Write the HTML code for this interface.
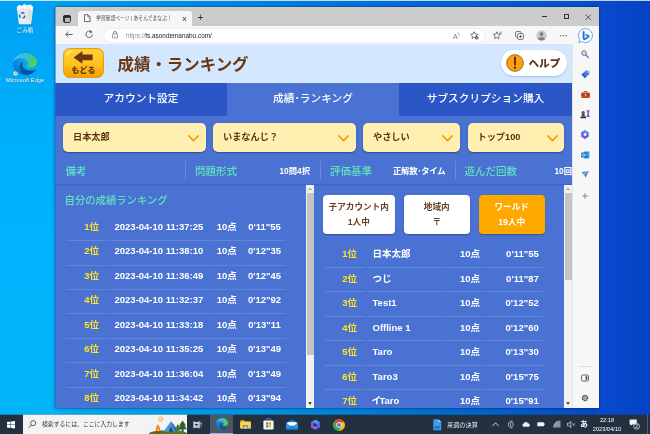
<!DOCTYPE html>
<html lang="ja">
<head>
<meta charset="utf-8">
<title>学習確認ページ | あそんでまなぶ！</title>
<style>
*{margin:0;padding:0;box-sizing:border-box}
html,body{width:650px;height:434px;overflow:hidden}
body{font-family:"Liberation Sans","Noto Sans CJK JP",sans-serif;position:relative;background:#0a9cec;}
.abs{position:absolute}
#root{position:absolute;left:0;top:0;width:650px;height:434px;overflow:hidden;will-change:transform}
svg{position:absolute;overflow:visible}
#desk{left:0;top:0;width:650px;height:434px;background:linear-gradient(90deg,#00a0f2 0%,#009cee 9%,#0078d8 49%,#0650c8 90%,#0444c0 94%,#0442be 100%)}
#deskb{left:0;top:396px;width:650px;height:20px;background:linear-gradient(90deg,#00b4f6 0%,#00aef2 9%,#00a5eb 17%,#0088dc 50%,#005aca 82%,#0548c8 93%,#0545c6 100%)}
#deskl{left:0;top:1px;width:60px;height:415px;background:linear-gradient(180deg,#00a0f2 0%,#00a3f4 8%,#00aef9 25%,#00b5fd 65%,#00b4f7 100%)}
#deskr{left:596px;top:1px;width:54px;height:415px;background:linear-gradient(90deg,#0a4ccf 0%,#0848cc 25%,#0442c3 100%)}
.dlabel{color:#fff;font-size:5.5px;text-align:center;white-space:nowrap;text-shadow:0 .4px .8px rgba(0,40,90,.55)}
/* window */
#win{left:55px;top:7px;width:544px;height:401px;background:#f7f7f7;box-shadow:0 0 1.6px rgba(0,20,70,.65),0 1px 4px rgba(0,20,70,.2)}
#tbar{left:0;top:0;width:544px;height:19px;background:#cccccc}
#tab{left:23px;top:4px;width:114px;height:15px;background:#f7f7f7;border-radius:3px 3px 0 0}
#tabtxt{left:41px;top:7px;font-size:5.8px;line-height:8px;color:#555;white-space:nowrap;transform:scaleX(.83);transform-origin:0 0}
#tool{left:0;top:19px;width:544px;height:18px;background:#f7f7f7}
#addr{left:49px;top:22px;width:381px;height:13px;background:#fff;border-radius:6.5px;box-shadow:0 0 0 .5px #e6e6e6}
#url{left:71px;top:23.5px;font-size:6.42px;line-height:9px;color:#222;white-space:nowrap}
#url span{color:#8f8f8f}
#side{left:517px;top:37px;width:27px;height:364px;background:#f7f7f7;box-shadow:inset 1px 0 0 #e8e8e8}
.ti{color:#333;font-size:9px;line-height:10px;white-space:nowrap}
/* page */
#page{left:0;top:37px;width:517px;height:364px;background:#4a72d2;overflow:hidden}
#phead{left:0;top:0;width:517px;height:39px;background:#d3e7ff}
#ptitle{left:62.5px;top:8.4px;font-size:16.45px;line-height:24px;font-weight:bold;color:#6b3712;white-space:nowrap}
.tabb{top:39px;height:32.5px;color:#fff;font-size:10.7px;font-weight:500;line-height:31px;text-align:center;white-space:nowrap}
.dd{top:79px;height:29px;background:#fff0b2;border-radius:5px;color:#5a3210;font-size:9.2px;font-weight:bold;line-height:28.6px;padding-left:10px;white-space:nowrap;box-shadow:0 1px 1.5px rgba(0,0,50,.35)}
.dd svg{right:6.5px;top:11.5px}
.lab{top:120px;color:#5fe3bd;font-size:10.5px;font-weight:500;line-height:14px;white-space:nowrap}
.val{top:120.5px;color:#fff;font-size:8.3px;font-weight:bold;line-height:12px;white-space:nowrap}
.vsep{top:117px;width:1px;height:19px;background:#6a8ade}
#lp{left:0;top:141px;width:250px;height:223px;overflow:hidden}
#rp{left:258px;top:141px;width:251px;height:223px;overflow:hidden}
.row{height:24.5px;left:0;width:100%}
.c{position:absolute;top:0;height:24.43px;line-height:20px;font-size:9.5px;font-weight:bold;color:#fff;white-space:nowrap;border-bottom:1px solid #6486da}
.c.rk{color:#ffe425}
#lp .c{height:24.2px}
#rp .c{height:23.7px}
.btn{top:10px;height:39px;border-radius:4px;font-size:8.65px;font-weight:bold;text-align:center;line-height:15px;padding-top:4.5px;white-space:nowrap;box-shadow:0 1px 1.5px rgba(0,0,50,.3)}
.sb{top:141px;width:8px;height:223px;background:#f1f1f1}
.thumb{left:.5px;width:7.5px;background:#c4c4c4}
.arr{left:0;width:8px;height:8px;background:#f1f1f1}
.arr.up{top:0}.arr.dn{bottom:0}
.arr:after{content:"";position:absolute;left:2.5px;border:1.6px solid transparent}
.arr.up:after{top:1px;border-bottom:2px solid #555;border-top:0}
.arr.dn:after{top:3.5px;border-top:2px solid #333;border-bottom:0}
#lsb{left:251.2px}#rsb{left:509px}
/* taskbar */
#task{left:0;top:414px;width:650px;height:20px;background:linear-gradient(180deg,rgba(34,48,63,.35) 0,rgba(34,48,63,.35) 1px,#22303f 1px)}
#search{left:22.6px;top:414px;width:164.2px;height:20px;background:linear-gradient(180deg,rgba(243,243,243,.35) 0,rgba(243,243,243,.35) 1px,#f3f3f3 1px)}
#stxt{left:42px;top:420px;font-size:5.85px;line-height:9px;color:#333;white-space:nowrap}
.tt{color:#fff;white-space:nowrap;font-size:5.7px;line-height:7px}
</style>
</head>
<body>
<div id="root">
<div id="desk" class="abs"></div>
<div id="deskb" class="abs"></div>
<div id="deskl" class="abs"></div>
<div id="deskr" class="abs"></div>
<div class="abs" style="left:0;top:0;width:650px;height:1px;background:rgba(255,255,255,.75)"></div>

<!-- desktop icons -->
<svg style="left:16px;top:3.5px" width="18" height="20.5" viewBox="0 0 18 20.5"><path d="M.8 3.4 L3 .9 L5.6 1.9 L8.6 .3 L11.4 1.6 L14.4 .6 L17.2 3.2 L15.2 19.4 Q15.1 20.2 14.2 20.2 H3.8 Q2.9 20.2 2.8 19.4Z" fill="#e9edf0"/><path d="M.8 3.4 L3 .9 L5.6 1.9 L8.6 .3 L11.4 1.6 L14.4 .6 L17.2 3.2 L16.9 5.4 L13.6 4.2 L10.6 5.6 L7.4 4 L4.2 5.4 L1.1 4.8Z" fill="#f9fafb"/><path d="M5.6 1.9 L7.4 4 M11.4 1.6 L10.6 5.6 M14.4 .6 L13.6 4.2 M4.2 5.4 L5.2 10 L3.4 14 M13.6 4.2 L12.8 9 L14.6 13 M10.6 5.6 L11.6 12 L10.4 18 M7.4 4 L8 9" fill="none" stroke="#c5ccd2" stroke-width=".45"/><path d="M12.4 6 L16.4 7 L15.4 17 L13 19.6Z" fill="#d5dbe0" opacity=".8"/><circle cx="6.2" cy="11.4" r="2.7" fill="none" stroke="#1f74d4" stroke-width="1.5" stroke-dasharray="3.6 2"/></svg>
<div class="abs dlabel" style="left:5px;top:25.8px;width:40px;font-size:5.6px">ごみ箱</div>
<svg style="left:13.2px;top:53px" width="23.8" height="22" viewBox="0 0 256 256" preserveAspectRatio="none"><defs><linearGradient id="ega" x1="58" y1="177" x2="240" y2="177" gradientUnits="userSpaceOnUse"><stop offset="0" stop-color="#0c59a4"/><stop offset="1" stop-color="#114a8b"/></linearGradient><linearGradient id="egc" x1="157" y1="100" x2="46" y2="221" gradientUnits="userSpaceOnUse"><stop offset="0" stop-color="#1b9de2"/><stop offset=".5" stop-color="#0f8adb"/><stop offset="1" stop-color="#0078d4"/></linearGradient><linearGradient id="ege" x1="20" y1="60" x2="250" y2="120" gradientUnits="userSpaceOnUse"><stop offset="0" stop-color="#35c1f1"/><stop offset=".45" stop-color="#2fc2d8"/><stop offset=".8" stop-color="#45cb70"/><stop offset="1" stop-color="#5fd552"/></linearGradient></defs><path d="M235.7 195.5a93.7 93.7 0 0 1-10.600 4.700 101.900 101.900 0 0 1-35.900 6.400c-47.300 0-88.500-32.500-88.500-74.300a31.500 31.500 0 0 1 16.400-27.300c-42.800 1.800-53.800 46.400-53.800 72.500 0 73.900 68.100 81.400 82.800 81.400 7.900 0 19.800-2.300 27-4.600l1.300-.4a128.300 128.300 0 0 0 66.600-52.800 4 4 0 0 0-5.300-5.600z" fill="url(#ega)"/><path d="M105.700 241.400a79.200 79.200 0 0 1-22.700-21.300 80.700 80.700 0 0 1 29.500-120c3.200-1.500 8.500-4.100 15.600-4a32.400 32.400 0 0 1 25.700 13 31.900 31.900 0 0 1 6.300 18.700c0-.2 24.500-79.600-80-79.600-43.900 0-80 41.600-80 78.200a130.200 130.200 0 0 0 12.100 56 128 128 0 0 0 156.400 67 75.500 75.500 0 0 1-62.800-8z" fill="url(#egc)"/><path d="M152.300 148.900c-.9 1-3.400 2.500-3.400 5.600 0 2.600 1.700 5.200 4.800 7.300 14.300 10 41.400 8.600 41.500 8.600a59.600 59.600 0 0 0 30.300-8.300 61.400 61.400 0 0 0 30.400-52.900c.3-22.400-8-37.300-11.300-43.900C223.500 23.900 178 0 128 0A128 128 0 0 0 0 126.200c.5-36.500 36.800-66 80-66 3.500 0 23.500.3 42 10a72.600 72.600 0 0 1 30.900 29.300c6.100 10.600 7.200 24.100 7.200 29.500s-2.700 13.300-7.800 19.900z" fill="url(#ege)"/></svg><svg style="left:13px;top:70.5px" width="5" height="5" viewBox="0 0 5 5"><circle cx="2.5" cy="2.5" r="2.1" fill="#e4eec4" stroke="#b5c98a" stroke-width=".5"/><path d="M1.6 3.3 L3.2 1.8 M2.2 1.7 H3.3 V2.8" fill="none" stroke="#2a7fd0" stroke-width=".5"/></svg>
<div class="abs dlabel" style="left:0px;top:76.6px;width:50px;font-size:5.8px">Microsoft Edge</div>

<div id="win" class="abs">
  <div class="abs" style="left:0;top:0;width:1px;height:401px;background:rgba(20,120,215,.55);z-index:5"></div>
  <div id="tbar" class="abs"></div>
  <div id="tab" class="abs"></div>
  <!-- tab actions icon -->
  <svg style="left:7.5px;top:8px" width="8" height="8" viewBox="0 0 8 8"><rect x=".6" y=".6" width="6.8" height="6.8" rx="1.3" fill="none" stroke="#222" stroke-width="1"/><rect x=".6" y=".6" width="6.8" height="2.2" fill="#222"/><rect x=".6" y="2" width="1.6" height="5" fill="#333"/><rect x="2.4" y="3" width="4.6" height="4" fill="#b5b5b5"/></svg>
  <!-- page icon -->
  <svg style="left:28.8px;top:7px" width="6.6" height="8.3" viewBox="0 0 7 8.5"><path d="M.6 .6 H4.2 L6.4 2.8 V7.9 H.6Z" fill="#fff" stroke="#333" stroke-width=".8" stroke-linejoin="round"/><path d="M4.1 .7 V3 H6.3" fill="none" stroke="#333" stroke-width=".6"/></svg>
  <div id="tabtxt" class="abs">学習確認ページ | あそんでまなぶ！</div>
  <div class="abs ti" style="left:127px;top:6.6px;font-size:8.5px">×</div>
  <div class="abs ti" style="left:142.4px;top:6.2px;font-size:10px">+</div>
  <!-- window controls -->
  <div class="abs" style="left:487px;top:8.8px;width:5px;height:.8px;background:#333"></div>
  <div class="abs" style="left:508.5px;top:6.8px;width:5.4px;height:5.4px;border:.7px solid #333"></div>
  <svg style="left:530px;top:6.5px" width="6.5" height="6.5" viewBox="0 0 6.5 6.5"><path d="M.6 .6 L5.9 5.9 M5.9 .6 L.6 5.9" stroke="#333" stroke-width=".75"/></svg>

  <div id="tool" class="abs"></div>
  <!-- back, reload -->
  <svg style="left:10px;top:24px" width="8" height="7" viewBox="0 0 8 7"><path d="M7.6 3.5 H.8 M3.6 .6 L.7 3.5 L3.6 6.4" fill="none" stroke="#444" stroke-width=".8"/></svg>
  <svg style="left:30.3px;top:23.2px" width="8.6" height="8.6" viewBox="0 0 8 8"><path d="M6.9 4.2 A3 3 0 1 1 5.8 1.7" fill="none" stroke="#444" stroke-width=".75"/><path d="M4.6 .2 L6.6 1.9 L4.4 2.9" fill="none" stroke="#444" stroke-width=".75"/></svg>
  <div id="addr" class="abs"></div>
  <svg style="left:56.5px;top:24px" width="6" height="7.5" viewBox="0 0 6 7.5"><rect x=".5" y="2.8" width="5" height="4.2" rx=".8" fill="none" stroke="#6a6a6a" stroke-width=".7"/><path d="M1.6 2.8 V1.8 A1.4 1.4 0 0 1 4.4 1.8 V2.8" fill="none" stroke="#555" stroke-width=".7"/><circle cx="3" cy="4.9" r=".5" fill="#555"/></svg>
  <div id="url" class="abs"><span>https://</span>fs.asondemanabu.com/</div>
  <!-- right toolbar icons -->
  <div class="abs" style="left:398px;top:23px;font-size:7px;line-height:9px;color:#7a7a7a">A<span style="font-size:4px;vertical-align:3px">ᴵ)</span></div>
  <svg style="left:414.5px;top:23.5px" width="9" height="9" viewBox="0 0 9 9"><path d="M4.2 .7 L5.3 3 L7.8 3.3 L6 5 L6.4 7.5 L4.2 6.3 L2 7.5 L2.4 5 L.6 3.3 L3.1 3Z" fill="none" stroke="#444" stroke-width=".7" stroke-linejoin="round"/><circle cx="6.8" cy="6.8" r="1.7" fill="#444"/><path d="M6.8 5.9 V7.7 M5.9 6.8 H7.7" stroke="#fff" stroke-width=".5"/></svg>
  <svg style="left:438px;top:23.5px" width="9" height="9" viewBox="0 0 9 9"><path d="M3.8 .8 L4.8 3.1 L7.3 3.4 L5.5 5.1 L5.9 7.6 L3.8 6.4 L1.6 7.6 L2 5.1 L.3 3.4 L2.8 3.1Z" fill="none" stroke="#444" stroke-width=".7" stroke-linejoin="round"/><path d="M6.3 1.2 H8.7 M6.9 2.6 H8.7" stroke="#444" stroke-width=".6"/></svg>
  <svg style="left:460px;top:23.5px" width="9" height="9" viewBox="0 0 9 9"><rect x=".5" y=".5" width="5.6" height="5.6" rx="1.2" fill="none" stroke="#444" stroke-width=".7"/><rect x="2.6" y="2.6" width="5.8" height="5.8" rx="1.2" fill="#f7f7f7" stroke="#444" stroke-width=".7"/><path d="M5.5 4 V7 M4 5.5 H7" stroke="#444" stroke-width=".7"/></svg>
  <svg style="left:481px;top:22.5px" width="11" height="11" viewBox="0 0 11 11"><circle cx="5.5" cy="5.5" r="5.2" fill="#c9c9c9"/><circle cx="5.5" cy="4.1" r="1.9" fill="#7d7d7d"/><path d="M1.9 9 C2.2 6.6 8.8 6.6 9.1 9 A5.2 5.2 0 0 1 1.9 9Z" fill="#7d7d7d"/></svg>
  <svg style="left:504.6px;top:27.6px" width="7" height="1.4" viewBox="0 0 7 1.4"><circle cx=".7" cy=".7" r=".6" fill="#444"/><circle cx="3.5" cy=".7" r=".6" fill="#444"/><circle cx="6.3" cy=".7" r=".6" fill="#444"/></svg>
  <!-- bing -->
  <svg style="left:523.3px;top:21.2px" width="15" height="15.4" viewBox="0 0 15 15.4"><defs><linearGradient id="bg1" x1="0" y1="0" x2="1" y2="1"><stop offset="0" stop-color="#1b5fe0"/><stop offset=".6" stop-color="#1f7be8"/><stop offset="1" stop-color="#2fc4e6"/></linearGradient></defs><path d="M7.6 .6 A7 7 0 1 1 3.6 13.4 L.9 14.6 L1.6 11.6 A7 7 0 0 1 7.6 .6Z" fill="#fff" stroke="#4a8ef0" stroke-width=".8"/><path d="M4.7 2.9 L6.6 3.6 V10.2 L9.4 8.6 L8 7.9 L7.2 5.8 L11.5 7.3 V9.4 L6.6 12.3 L4.7 11.2Z" fill="url(#bg1)"/></svg>

  <div id="side" class="abs">
    <svg style="left:9.40px;top:6.40px" width="8" height="8.4" viewBox="0 0 8 8.4"><circle cx="3.1" cy="3.1" r="2.3" fill="#d6e6f7" stroke="#5a6270" stroke-width=".9"/><path d="M5 5.1 L7.3 7.6" stroke="#8a3fd0" stroke-width="1.3" stroke-linecap="round"/></svg>
    <svg style="left:9.10px;top:26.30px" width="8.6" height="8.4" viewBox="0 0 8.6 8.4"><path d="M5 .5 L8.2 .7 L8.3 3.9 L3.9 8 L.5 4.6Z" fill="#3f78ee"/><path d="M.5 4.6 L3.9 8 L5.2 6.8 L1.8 3.4Z" fill="#2a55c8"/><circle cx="6.9" cy="2" r=".9" fill="#ffd64a"/></svg>
    <svg style="left:8.80px;top:46.90px" width="9.2" height="7.4" viewBox="0 0 9.2 7.4"><path d="M3.1 1.6 V.6 H6.1 V1.6" fill="none" stroke="#9a3414" stroke-width=".8"/><rect x=".3" y="1.5" width="8.6" height="5.6" rx=".8" fill="#cc4a22"/><rect x=".3" y="3.3" width="8.6" height="1" fill="#8f2e14"/><rect x="3.8" y="2.9" width="1.6" height="1.9" fill="#f0b898"/></svg>
    <svg style="left:8.40px;top:66.10px" width="10" height="8.6" viewBox="0 0 10 8.6"><circle cx="3.2" cy="2.6" r="1.7" fill="#5a5a5a"/><path d="M2 3.8 H4.4 L5 6.6 H1.4Z" fill="#484848"/><rect x=".5" y="6.5" width="5.6" height="1.8" rx=".4" fill="#333"/><path d="M6.4 .3 H9.8 L8.7 3.6 L9.8 7 H6.4 L7.5 3.6Z" fill="#9a4ee0"/></svg>
    <svg style="left:9.10px;top:85.80px" width="8" height="9.2" viewBox="0 0 8 9.2"><path d="M4 .3 L7.7 2.4 V6.8 L4 8.9 L.3 6.8 V2.4Z" fill="#5560dc"/><path d="M4 .3 L7.7 2.4 L5.2 4 L2.4 2.6 V1.2Z" fill="#3aa0f4"/><path d="M4 8.9 L.3 6.8 V2.4 L2.4 1.2 V5.6 L5.4 7.4Z" fill="#9458da"/><circle cx="4.1" cy="4.6" r="1.5" fill="#f7f7f7"/></svg>
    <svg style="left:8.90px;top:106.80px" width="8.6" height="8" viewBox="0 0 8.6 8"><rect x="3" y=".5" width="5.3" height="7" rx=".7" fill="#2b8ee8"/><path d="M3 2.6 L5.6 4.4 L8.3 2.6" fill="none" stroke="#9ad6ff" stroke-width=".6"/><rect x=".3" y="1.4" width="5" height="5.2" rx=".7" fill="#0f62be"/><circle cx="2.8" cy="4" r="1.3" fill="none" stroke="#fff" stroke-width=".8"/></svg>
    <svg style="left:9.10px;top:127.30px" width="8.2" height="6.6" viewBox="0 0 8.2 6.6"><path d="M.2 1.1 L8 .2 L4.6 6.4 L3.4 3.6Z" fill="#2f8af0"/><path d="M8 .2 L1.4 2.6 L3.4 3.6Z" fill="#62b4ff"/><path d="M8 .2 L1.2 3.4 L2.4 4 Z" fill="#f5b02a"/><path d="M3.4 3.6 L4.6 6.4 L5 4.6Z" fill="#1b5fc0"/></svg>
    <svg style="left:10.40px;top:149.20px" width="6" height="6" viewBox="0 0 6 6"><path d="M3 .2 V5.8 M.2 3 H5.8" stroke="#5a5a5a" stroke-width=".65"/></svg>
    <div class="abs" style="left:6.5px;top:321.5px;width:14px;height:1px;background:#dcdcdc"></div>
    <svg style="left:9.40px;top:329.50px" width="8" height="8" viewBox="0 0 8 8"><rect x=".5" y="1" width="7" height="6" rx="1.2" fill="none" stroke="#444" stroke-width=".8"/><rect x="4.6" y="2.2" width="1.7" height="3.6" fill="#444"/></svg>
    <svg style="left:9.40px;top:349.50px" width="8" height="8" viewBox="0 0 8 8"><circle cx="4" cy="4" r="2.6" fill="none" stroke="#444" stroke-width="1.4" stroke-dasharray="1.2 .85"/><circle cx="4" cy="4" r="2.2" fill="none" stroke="#444" stroke-width=".7"/><circle cx="4" cy="4" r=".8" fill="none" stroke="#444" stroke-width=".5"/></svg>
  </div>

  <div id="page" class="abs">
    <div id="phead" class="abs"></div>
    <!-- back button -->
    <svg style="left:8px;top:4px" width="41" height="30" viewBox="0 0 41 30"><defs><linearGradient id="bk" x1="0" y1="0" x2="0" y2="1"><stop offset="0" stop-color="#ffd435"/><stop offset=".55" stop-color="#ffc21c"/><stop offset="1" stop-color="#f59f00"/></linearGradient></defs><rect x=".6" y=".6" width="39.8" height="28.8" rx="6" fill="url(#bk)" stroke="#e89600" stroke-width="1"/><path d="M3 9 C3.5 4.5 6 2.8 11 2.6 C7 4.4 5 6.4 3 9Z" fill="#fff3b0" opacity=".9"/><path d="M10.6 9.4 L19.4 3 V6.6 H29.6 V12.2 H19.4 V15.8Z" fill="#6b3712"/><text x="20.5" y="24.8" font-size="8" font-weight="900" fill="#6b3712" text-anchor="middle" font-family="'Liberation Sans','Noto Sans CJK JP',sans-serif">もどる</text></svg>
    <div id="ptitle" class="abs">成績・ランキング</div>
    <!-- help -->
    <div class="abs" style="left:446.4px;top:5.5px;width:65.8px;height:26px;border-radius:13px;background:#fff;box-shadow:0 1px 2px rgba(40,70,140,.25)"></div>
    <svg style="left:451px;top:9.5px" width="18" height="18" viewBox="0 0 18 18"><circle cx="9" cy="9" r="8.3" fill="#ff9f0a" stroke="#8a5a1a" stroke-width=".9"/><path d="M9 3.6 V10.4" stroke="#5a2f0c" stroke-width="2" stroke-linecap="round"/><circle cx="9" cy="13.7" r="1.2" fill="#5a2f0c"/></svg>
    <div class="abs" style="left:473.5px;top:10.5px;font-size:10.6px;line-height:16px;font-weight:900;color:#5f3614;white-space:nowrap">ヘルプ</div>

    <div class="abs tabb" style="left:0;width:172px;background:#2a56c6">アカウント設定</div>
    <div class="abs tabb" style="left:172px;width:172px;background:#4a72d2">成績･ランキング</div>
    <div class="abs tabb" style="left:344px;width:173px;background:#2a56c6">サブスクリプション購入</div>

    <div class="abs dd" style="left:8px;width:142.6px">日本太郎<svg width="11" height="7" viewBox="0 0 11 7"><path d="M.8 .9 L5.5 5.6 L10.2 .9" fill="none" stroke="#f9a000" stroke-width="1.7" stroke-linecap="round" stroke-linejoin="round"/></svg></div>
    <div class="abs dd" style="left:158px;width:142.6px">いまなんじ？<svg width="11" height="7" viewBox="0 0 11 7"><path d="M.8 .9 L5.5 5.6 L10.2 .9" fill="none" stroke="#f9a000" stroke-width="1.7" stroke-linecap="round" stroke-linejoin="round"/></svg></div>
    <div class="abs dd" style="left:308px;width:96.5px">やさしい<svg width="11" height="7" viewBox="0 0 11 7"><path d="M.8 .9 L5.5 5.6 L10.2 .9" fill="none" stroke="#f9a000" stroke-width="1.7" stroke-linecap="round" stroke-linejoin="round"/></svg></div>
    <div class="abs dd" style="left:412.5px;width:96.5px">トップ100<svg width="11" height="7" viewBox="0 0 11 7"><path d="M.8 .9 L5.5 5.6 L10.2 .9" fill="none" stroke="#f9a000" stroke-width="1.7" stroke-linecap="round" stroke-linejoin="round"/></svg></div>

    <div class="abs lab" style="left:10.5px">備考</div>
    <div class="abs vsep" style="left:130px"></div>
    <div class="abs lab" style="left:140px">問題形式</div>
    <div class="abs val" style="left:224.5px">10問4択</div>
    <div class="abs vsep" style="left:265px"></div>
    <div class="abs lab" style="left:275px">評価基準</div>
    <div class="abs val" style="left:338px;letter-spacing:-.22px">正解数･タイム</div>
    <div class="abs vsep" style="left:399.5px"></div>
    <div class="abs lab" style="left:409.5px">遊んだ回数</div>
    <div class="abs val" style="left:499.5px">10回</div>
    <div class="abs" style="left:0;top:140.3px;width:517px;height:1.7px;background:#4067c4"></div>

    <div id="lp" class="abs">
      <div class="abs lab" style="left:9.6px;top:9.2px;font-size:10.33px">自分の成績ランキング</div>
      <div class="abs row" style="top:32.00px"><div class="c rk" style="left:11px;width:43px;text-align:right;padding-right:10px">1位</div><div class="c" style="left:55.5px;width:99.5px;padding-left:4px">2023-04-10 11:37:25</div><div class="c" style="left:156px;width:29.5px;text-align:center;padding-left:2px">10点</div><div class="c" style="left:187px;width:43.5px;text-align:center;padding-left:1.5px">0'11&quot;55</div></div>
      <div class="abs row" style="top:56.43px"><div class="c rk" style="left:11px;width:43px;text-align:right;padding-right:10px">2位</div><div class="c" style="left:55.5px;width:99.5px;padding-left:4px">2023-04-10 11:38:10</div><div class="c" style="left:156px;width:29.5px;text-align:center;padding-left:2px">10点</div><div class="c" style="left:187px;width:43.5px;text-align:center;padding-left:1.5px">0'12&quot;35</div></div>
      <div class="abs row" style="top:80.86px"><div class="c rk" style="left:11px;width:43px;text-align:right;padding-right:10px">3位</div><div class="c" style="left:55.5px;width:99.5px;padding-left:4px">2023-04-10 11:36:49</div><div class="c" style="left:156px;width:29.5px;text-align:center;padding-left:2px">10点</div><div class="c" style="left:187px;width:43.5px;text-align:center;padding-left:1.5px">0'12&quot;45</div></div>
      <div class="abs row" style="top:105.29px"><div class="c rk" style="left:11px;width:43px;text-align:right;padding-right:10px">4位</div><div class="c" style="left:55.5px;width:99.5px;padding-left:4px">2023-04-10 11:32:37</div><div class="c" style="left:156px;width:29.5px;text-align:center;padding-left:2px">10点</div><div class="c" style="left:187px;width:43.5px;text-align:center;padding-left:1.5px">0'12&quot;92</div></div>
      <div class="abs row" style="top:129.72px"><div class="c rk" style="left:11px;width:43px;text-align:right;padding-right:10px">5位</div><div class="c" style="left:55.5px;width:99.5px;padding-left:4px">2023-04-10 11:33:18</div><div class="c" style="left:156px;width:29.5px;text-align:center;padding-left:2px">10点</div><div class="c" style="left:187px;width:43.5px;text-align:center;padding-left:1.5px">0'13&quot;11</div></div>
      <div class="abs row" style="top:154.15px"><div class="c rk" style="left:11px;width:43px;text-align:right;padding-right:10px">6位</div><div class="c" style="left:55.5px;width:99.5px;padding-left:4px">2023-04-10 11:35:25</div><div class="c" style="left:156px;width:29.5px;text-align:center;padding-left:2px">10点</div><div class="c" style="left:187px;width:43.5px;text-align:center;padding-left:1.5px">0'13&quot;49</div></div>
      <div class="abs row" style="top:178.58px"><div class="c rk" style="left:11px;width:43px;text-align:right;padding-right:10px">7位</div><div class="c" style="left:55.5px;width:99.5px;padding-left:4px">2023-04-10 11:36:04</div><div class="c" style="left:156px;width:29.5px;text-align:center;padding-left:2px">10点</div><div class="c" style="left:187px;width:43.5px;text-align:center;padding-left:1.5px">0'13&quot;49</div></div>
      <div class="abs row" style="top:203.01px"><div class="c rk" style="left:11px;width:43px;text-align:right;padding-right:10px">8位</div><div class="c" style="left:55.5px;width:99.5px;padding-left:4px">2023-04-10 11:34:42</div><div class="c" style="left:156px;width:29.5px;text-align:center;padding-left:2px">10点</div><div class="c" style="left:187px;width:43.5px;text-align:center;padding-left:1.5px">0'13&quot;94</div></div>
    </div>
    <div id="lsb" class="abs sb"><div class="abs thumb" style="top:8.4px;height:161.6px"></div><svg style="left:2px;top:3px" width="4" height="2.6" viewBox="0 0 4 2.6"><path d="M.3 2.3 L2 .5 L3.7 2.3" fill="none" stroke="#555" stroke-width=".8"/></svg><svg style="left:2px;top:217px" width="4" height="3" viewBox="0 0 4 3"><path d="M.2 .3 H3.8 L2 2.8Z" fill="#222"/></svg></div>
    <div id="rp" class="abs">
      <div class="abs btn" style="left:10px;width:71.5px;background:#fff;color:#694223">子アカウント内<br>1人中</div>
      <div class="abs btn" style="left:91px;width:65.6px;background:#fff;color:#694223">地域内<br>〒</div>
      <div class="abs btn" style="left:166px;width:65.5px;background:#ffa800;color:#fff">ワールド<br>19人中</div>
      <div class="abs row" style="top:59.25px"><div class="c rk" style="left:10.75px;width:42.25px;text-align:right;padding-right:9px">1位</div><div class="c" style="left:55px;width:75.75px;padding-left:4.5px">日本太郎</div><div class="c" style="left:132px;width:40px;text-align:right;padding-right:5px">10点</div><div class="c" style="left:173.5px;width:56.5px;text-align:right;padding-right:4.25px">0'11&quot;55</div></div>
      <div class="abs row" style="top:83.70px"><div class="c rk" style="left:10.75px;width:42.25px;text-align:right;padding-right:9px">2位</div><div class="c" style="left:55px;width:75.75px;padding-left:4.5px">つじ</div><div class="c" style="left:132px;width:40px;text-align:right;padding-right:5px">10点</div><div class="c" style="left:173.5px;width:56.5px;text-align:right;padding-right:4.25px">0'11&quot;87</div></div>
      <div class="abs row" style="top:108.15px"><div class="c rk" style="left:10.75px;width:42.25px;text-align:right;padding-right:9px">3位</div><div class="c" style="left:55px;width:75.75px;padding-left:4.5px">Test1</div><div class="c" style="left:132px;width:40px;text-align:right;padding-right:5px">10点</div><div class="c" style="left:173.5px;width:56.5px;text-align:right;padding-right:4.25px">0'12&quot;52</div></div>
      <div class="abs row" style="top:132.60px"><div class="c rk" style="left:10.75px;width:42.25px;text-align:right;padding-right:9px">4位</div><div class="c" style="left:55px;width:75.75px;padding-left:4.5px">Offline 1</div><div class="c" style="left:132px;width:40px;text-align:right;padding-right:5px">10点</div><div class="c" style="left:173.5px;width:56.5px;text-align:right;padding-right:4.25px">0'12&quot;60</div></div>
      <div class="abs row" style="top:157.05px"><div class="c rk" style="left:10.75px;width:42.25px;text-align:right;padding-right:9px">5位</div><div class="c" style="left:55px;width:75.75px;padding-left:4.5px">Taro</div><div class="c" style="left:132px;width:40px;text-align:right;padding-right:5px">10点</div><div class="c" style="left:173.5px;width:56.5px;text-align:right;padding-right:4.25px">0'13&quot;30</div></div>
      <div class="abs row" style="top:181.50px"><div class="c rk" style="left:10.75px;width:42.25px;text-align:right;padding-right:9px">6位</div><div class="c" style="left:55px;width:75.75px;padding-left:4.5px">Taro3</div><div class="c" style="left:132px;width:40px;text-align:right;padding-right:5px">10点</div><div class="c" style="left:173.5px;width:56.5px;text-align:right;padding-right:4.25px">0'15&quot;75</div></div>
      <div class="abs row" style="top:205.95px"><div class="c rk" style="left:10.75px;width:42.25px;text-align:right;padding-right:9px">7位</div><div class="c" style="left:55px;width:75.75px;padding-left:4.5px"><span style="letter-spacing:-1.6px;margin-left:-1px">イ</span>Taro</div><div class="c" style="left:132px;width:40px;text-align:right;padding-right:5px">10点</div><div class="c" style="left:173.5px;width:56.5px;text-align:right;padding-right:4.25px">0'15&quot;91</div></div>
    </div>
    <div id="rsb" class="abs sb"><div class="abs thumb" style="top:8.4px;height:87px"></div><svg style="left:2px;top:3px" width="4" height="2.6" viewBox="0 0 4 2.6"><path d="M.3 2.3 L2 .5 L3.7 2.3" fill="none" stroke="#555" stroke-width=".8"/></svg><svg style="left:2px;top:217px" width="4" height="3" viewBox="0 0 4 3"><path d="M.2 .3 H3.8 L2 2.8Z" fill="#222"/></svg></div>
  </div>
</div>

<!-- taskbar -->
<div id="task" class="abs"></div>
<svg style="left:7.4px;top:420.8px" width="8" height="7.6" viewBox="0 0 9 9" preserveAspectRatio="none"><path d="M0 1.3 L3.9 .7 V4.2 H0Z M4.5 .6 L9 0 V4.2 H4.5Z M0 4.8 H3.9 V8.3 L0 7.7Z M4.5 4.8 H9 V9 L4.5 8.4Z" fill="#fff"/></svg>
<div id="search" class="abs"></div>
<svg style="left:28px;top:420px" width="8.6" height="8.4" viewBox="0 0 9 9"><circle cx="5.4" cy="3.4" r="2.7" fill="none" stroke="#333" stroke-width=".8"/><path d="M3.5 5.4 L.6 8.4" stroke="#333" stroke-width=".9"/></svg>
<div id="stxt" class="abs">検索するには、ここに入力します</div>
<!-- camp picture -->
<svg style="left:148px;top:414px" width="39" height="20" viewBox="0 0 39 20"><ellipse cx="20" cy="19.6" rx="19" ry="3.4" fill="#5b7527"/><circle cx="12.6" cy="5" r="2.7" fill="#f3c98a"/><circle cx="12" cy="4.4" r="1.2" fill="#fbe3b5"/><path d="M15.5 17.8 L23 7.2 L31 17.8Z" fill="#4a97d4"/><path d="M23 7.2 L31 17.8 H27Z" fill="#2c6dab"/><path d="M21 17.8 L23 12.5 L25 17.8Z" fill="#1c3c63"/><path d="M8.8 18 C6.4 15 8.8 13 9.2 10.2 C11.6 12 13.2 15 11.6 18Z" fill="#ee8a1c"/><path d="M9.4 18 C8.6 16.4 9.6 15.4 9.9 14.2 C11 15.4 11.3 16.8 10.8 18Z" fill="#ffd440"/><path d="M6.6 18.7 L13.4 17.5 M7 17.4 L13.6 18.8" stroke="#7a4a1e" stroke-width="1"/><path d="M34.6 6.5 L38 11.5 H36.6 L38.8 15.2 H35.6 V18 H33.6 V15.2 H30.4 L32.6 11.5 H31.2Z" fill="#2f5f27"/><path d="M30 10 L32.2 13.6 H31.3 L32.8 16.4 H27.2 L28.7 13.6 H27.8Z" fill="#3c7430"/></svg>
<!-- task view -->
<svg style="left:192.6px;top:420.6px" width="9" height="7.6" viewBox="0 0 9 7.6"><path d="M.3 .3 H1.6 V.9 H5.4 V.3 H6.8 V7.3 H5.4 V6.7 H1.6 V7.3 H.3Z" fill="#c9cdd2"/><rect x="2.2" y="3" width="2.6" height="1.5" fill="#22303f"/><path d="M8.1 .4 V7.2" stroke="#8d959d" stroke-width=".7"/><rect x="7.6" y="2.1" width="1.1" height="1.3" fill="#f2f2f2"/></svg>
<!-- edge active -->
<div class="abs" style="left:210px;top:415px;width:23px;height:19px;background:#4a5864"></div>
<div class="abs" style="left:210px;top:432.8px;width:23px;height:1.2px;background:#7cc0f2"></div>
<svg style="left:215.8px;top:418.3px" width="12" height="12" viewBox="0 0 256 256"><path d="M235.7 195.5a93.7 93.7 0 0 1-10.600 4.700 101.900 101.900 0 0 1-35.900 6.400c-47.300 0-88.500-32.500-88.500-74.300a31.500 31.500 0 0 1 16.400-27.300c-42.800 1.800-53.800 46.400-53.800 72.500 0 73.900 68.100 81.400 82.800 81.400 7.900 0 19.800-2.300 27-4.600l1.300-.4a128.300 128.300 0 0 0 66.600-52.800 4 4 0 0 0-5.300-5.600z" fill="url(#ega)"/><path d="M105.700 241.400a79.200 79.200 0 0 1-22.700-21.300 80.700 80.700 0 0 1 29.500-120c3.200-1.500 8.500-4.100 15.600-4a32.400 32.400 0 0 1 25.700 13 31.900 31.900 0 0 1 6.300 18.700c0-.2 24.500-79.600-80-79.600-43.900 0-80 41.600-80 78.200a130.200 130.200 0 0 0 12.100 56 128 128 0 0 0 156.400 67 75.500 75.500 0 0 1-62.800-8z" fill="url(#egc)"/><path d="M152.300 148.900c-.9 1-3.400 2.500-3.400 5.600 0 2.600 1.700 5.200 4.800 7.300 14.300 10 41.400 8.600 41.500 8.600a59.600 59.600 0 0 0 30.300-8.300 61.400 61.400 0 0 0 30.400-52.900c.3-22.400-8-37.300-11.300-43.900C223.500 23.900 178 0 128 0A128 128 0 0 0 0 126.200c.5-36.500 36.800-66 80-66 3.500 0 23.500.3 42 10a72.600 72.600 0 0 1 30.900 29.300c6.100 10.600 7.200 24.100 7.200 29.500s-2.700 13.300-7.800 19.900z" fill="url(#ege)"/></svg>
<!-- explorer -->
<svg style="left:239.5px;top:419px" width="11" height="10" viewBox="0 0 11 10"><path d="M.3 1.2 H4 L5 2.2 H10.7 V9.4 H.3Z" fill="#f4b400"/><rect x=".3" y="3.3" width="10.4" height="6.1" fill="#ffd75a"/><rect x="2.8" y="6.2" width="5.4" height="3.2" fill="#3b8fde"/><rect x="3.8" y="7.4" width="3.4" height="2" fill="#ffd75a"/></svg>
<!-- store -->
<svg style="left:263px;top:418px" width="11" height="12" viewBox="0 0 11 12"><path d="M3.4 2.6 V1.4 A.8 .8 0 0 1 4.2 .6 H6.8 A.8 .8 0 0 1 7.6 1.4 V2.6" fill="none" stroke="#3a8fdd" stroke-width=".9"/><rect x=".4" y="2.4" width="10.2" height="9" rx="1" fill="#f4f4f4"/><rect x="3" y="4.4" width="2.2" height="2.2" fill="#f25022"/><rect x="5.8" y="4.4" width="2.2" height="2.2" fill="#7fba00"/><rect x="3" y="7.2" width="2.2" height="2.2" fill="#00a4ef"/><rect x="5.8" y="7.2" width="2.2" height="2.2" fill="#ffb900"/></svg>
<!-- mail -->
<svg style="left:285.5px;top:419px" width="12" height="10.5" viewBox="0 0 12 10.5"><path d="M.3 4 L6 .4 L11.7 4 V10.2 H.3Z" fill="#1c7cd6"/><path d="M1.3 3.2 H10.7 V8 H1.3Z" fill="#fff"/><path d="M.3 4.2 L6 7.6 L11.7 4.2 V10.2 H.3Z" fill="#2f9bf0"/><path d="M.3 10.2 L6 6.2 L11.7 10.2Z" fill="#1f86e2"/></svg>
<!-- m365 -->
<svg style="left:309.5px;top:418.5px" width="11" height="11.5" viewBox="0 0 11 11"><path d="M5.5 .4 L10 3 V8 L5.5 10.6 L1 8 V3Z" fill="#5d62d9"/><path d="M5.5 .4 L10 3 L6.6 5 L3.5 3.2 V1.6Z" fill="#39a0f2"/><path d="M5.5 10.6 L1 8 V3 L3.5 1.6 V6.6 L6.8 8.5Z" fill="#9a5ad8"/><path d="M3.5 3.4 L6.6 5.2 V7 L3.5 6.6Z" fill="#22303f"/></svg>
<!-- chrome -->
<svg style="left:332.5px;top:418.5px" width="12" height="12" viewBox="0 0 12 12"><circle cx="6" cy="6" r="5.8" fill="#fbbc05"/><path d="M6 6 L.98 3.1 A5.8 5.8 0 0 1 11.02 3.1Z" fill="#ea4335"/><path d="M6 6 L.98 3.1 A5.8 5.8 0 0 0 6 11.8 L8.6 7.3Z" fill="#34a853"/><path d="M6 3.2 H11.1 A5.8 5.8 0 0 1 6 11.8 L8.5 7.4Z" fill="#fbbc05"/><circle cx="6" cy="6" r="2.7" fill="#fff"/><circle cx="6" cy="6" r="2.1" fill="#4285f4"/></svg>
<!-- file -->
<svg style="left:433px;top:418.5px" width="8.5" height="11.5" viewBox="0 0 8.5 11.5"><path d="M.3 .3 H5.6 L8.2 2.9 V11.2 H.3Z" fill="#3aa0ee"/><path d="M5.6 .3 L8.2 2.9 H5.6Z" fill="#a6d8ff"/><rect x="1.6" y="7" width="5.2" height="2.6" fill="#1e74c8"/></svg>
<div class="abs tt" style="left:447px;top:420.5px;font-size:6.2px;line-height:8px;color:#eee">来週の決算</div>
<svg style="left:492px;top:421.5px" width="7" height="4.5" viewBox="0 0 7 4.5"><path d="M.4 4 L3.5 .8 L6.6 4" fill="none" stroke="#fff" stroke-width=".8"/></svg>
<svg style="left:508px;top:420px" width="6" height="9" viewBox="0 0 6 9"><path d="M4.6 1.2 A3.4 3.4 0 1 0 4.6 7.8" fill="none" stroke="#ddd" stroke-width=".8"/><rect x="2.6" y="2.6" width="2.6" height="3.6" rx=".8" fill="none" stroke="#ddd" stroke-width=".7"/></svg>
<svg style="left:522px;top:421.5px" width="8" height="5" viewBox="0 0 9.5 6"><path d="M2.2 5.8 A2 2 0 0 1 2 1.9 A2.7 2.7 0 0 1 7 1.6 A2.1 2.1 0 0 1 7.4 5.8Z" fill="#f2f2f2"/></svg>
<svg style="left:537px;top:422px" width="8" height="4.6" viewBox="0 0 9.5 5.5"><rect x=".3" y=".3" width="8" height="4.9" rx=".6" fill="#f2f2f2"/><rect x="8.5" y="1.7" width=".8" height="2" fill="#f2f2f2"/></svg>
<svg style="left:553px;top:420px" width="8" height="8" viewBox="0 0 8 8"><path d="M.5 7.5 A7 7 0 0 1 7.5 .5 V7.5Z" fill="#8a939c"/><path d="M.5 7.5 A7 7 0 0 1 4.5 1.3" fill="none" stroke="#c9ced3" stroke-width=".6"/></svg>
<svg style="left:566.5px;top:420.5px" width="10" height="7" viewBox="0 0 10 7"><path d="M.4 2.3 H1.8 L3.8 .5 V6.5 L1.8 4.7 H.4Z" fill="none" stroke="#eee" stroke-width=".7"/><path d="M5.6 2.3 L7.8 4.7 M7.8 2.3 L5.6 4.7" stroke="#eee" stroke-width=".6"/></svg>
<div class="abs tt" style="left:580px;top:419.5px;font-size:8px;line-height:9px;font-weight:bold">あ</div>
<div class="abs tt" style="left:592px;top:416.5px;width:30px;text-align:center">22:18</div>
<div class="abs tt" style="left:590px;top:425.5px;width:34px;text-align:center">2023/04/10</div>
<svg style="left:629px;top:419px" width="11" height="11" viewBox="0 0 11 11"><path d="M.6 .6 H7.8 V5.6 H3.2 L1.8 7 V5.6 H.6Z" fill="#f2f2f2"/><circle cx="7.6" cy="7.4" r="2.9" fill="#22303f" stroke="#f2f2f2" stroke-width=".7"/><text x="7.6" y="9.1" font-size="4.6" fill="#fff" text-anchor="middle" font-family="'Liberation Sans',sans-serif">2</text></svg>
<div class="abs" style="left:647px;top:414px;width:1px;height:20px;background:#55606c"></div>
</div>
</body>
</html>
